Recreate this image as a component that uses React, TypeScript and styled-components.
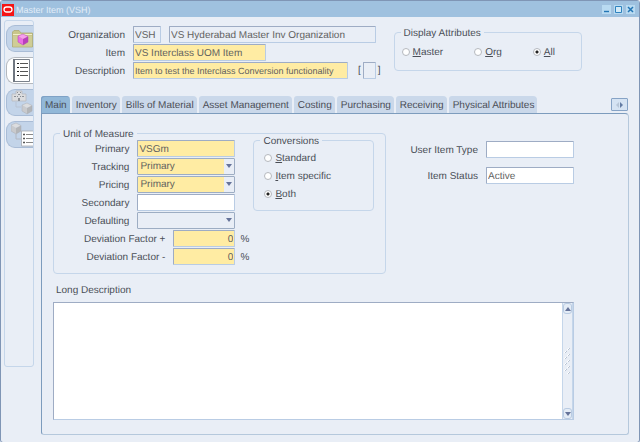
import React, { useState } from "react";
import styled, { createGlobalStyle } from "styled-components";

const c = {
  bg: "#e9eef6",
  title: "#9fc1df",
  text: "#4a4e56",
  fieldText: "#62625f",
  group: "#c5d6ea",
  edge: "#9eacc4",
  soft: "#b9cce4",
  panel: "#7d9cbd",
  yellow: "#ffeca3",
  tab: "#cad8ea",
  tabOn: "#92b8d8",
};

const Global = createGlobalStyle`
  *, *::before, *::after { box-sizing: border-box; }
  body {
    margin: 0;
    background: ${c.bg};
    color: ${c.text};
    font: 10px/12px "Liberation Sans", Arial, sans-serif;
    text-rendering: geometricPrecision;
  }
  button, input, select, textarea {
    font: inherit;
    color: inherit;
    margin: 0;
    text-rendering: inherit;
  }
`;

const Window = styled.main`
  display: flex;
  flex-direction: column;
  min-height: 100vh;
  border: 1px solid #7f95b5;
  border-radius: 3px;
  background: ${c.bg};
`;

const TitleBar = styled.header`
  display: flex;
  align-items: center;
  height: 16px;
  padding: 0 3px 0 1px;
  gap: 1px;
  background: ${c.title};
  color: #e2edf8;
`;

const Title = styled.h1`
  flex: 1;
  margin: 0;
  padding-top: 2px;
  font: inherit;
  font-size: 9px;
`;

const WindowButton = styled.button`
  display: flex;
  width: 11px;
  height: 10px;
  padding: 0;
  border: 0;
  background: none;
  svg { display: block; }
`;

const Body = styled.div`
  display: flex;
  flex: 1;
  gap: 7px;
  padding: 3px 10px 7px 3px;
`;

const Rail = styled.nav`
  align-self: flex-start;
  display: flex;
  flex-direction: column;
  align-items: flex-end;
  gap: 5px;
  width: 30px;
  min-height: 347px;
  padding: 4px 0;
  border: 1px solid ${c.group};
  border-radius: 3px;
`;

const RailButton = styled.button<{ $on?: boolean }>`
  display: flex;
  align-items: center;
  justify-content: flex-end;
  width: 27px;
  height: 27px;
  padding: 0;
  border: 1px solid ${(p) => (p.$on ? "#b4b8be" : "#a9bcd6")};
  border-right: 0;
  border-radius: 9px 0 0 9px;
  background: ${(p) => (p.$on ? "#fff" : "#c3d4e9")};
`;

const Content = styled.div`
  flex: 1;
  min-width: 0;
  display: flex;
  flex-direction: column;
`;

const Heading = styled.section`
  display: flex;
  align-items: flex-start;
  gap: 13px;
  height: 76px;
  padding-top: 6px;
`;

const Fields = styled.div`
  display: grid;
  grid-template-columns: 84px auto;
  column-gap: 8px;
  row-gap: 1px;
  align-items: center;
`;

const Label = styled.label`
  padding-top: 3px;
  text-align: right;
  white-space: nowrap;
`;

const Line = styled.div<{ $gap?: number }>`
  display: flex;
  align-items: center;
  gap: ${(p) => p.$gap ?? 8}px;
`;

const Field = styled.input<{
  $w: number;
  $tone?: "required" | "locked";
  $right?: boolean;
  $compact?: boolean;
}>`
  width: ${(p) => p.$w}px;
  height: 17px;
  padding: 1px 1px 0;
  border: 1px solid;
  border-color: ${c.edge} ${c.soft} ${c.soft} ${c.edge};
  border-radius: 1px;
  background: ${(p) => (p.$tone === "required" ? c.yellow : p.$tone === "locked" ? c.bg : "#fff")};
  color: ${c.fieldText};
  font-size: ${(p) => (p.$compact ? 9 : 10)}px;
  text-align: ${(p) => (p.$right ? "right" : "left")};
  outline: 0;
`;

const Group = styled.fieldset`
  min-width: 0;
  margin: 0;
  padding: 0;
  border: 1px solid ${c.group};
  border-radius: 4px;
`;

const Legend = styled.legend`
  height: 12px;
  margin-left: 6px;
  padding: 2px 3px 0;
`;

const DisplayGroup = styled(Group)`
  width: 188px;
  height: 45px;
`;

const DisplayOptions = styled.div`
  display: flex;
  gap: 31px;
  padding: 8px 7px 0;
`;

const RadioLabel = styled.label`
  display: flex;
  align-items: center;
  gap: 3px;
  height: 12px;
  white-space: nowrap;
  span { padding-top: 1px; }
  u { text-underline-offset: 1px; }
`;

const Radio = styled.input`
  appearance: none;
  width: 8px;
  height: 8px;
  margin: 0;
  border: 1px solid #b5b8be;
  border-radius: 50%;
  background: #fff;
  &:checked { background: radial-gradient(circle, #222 0 1px, #fff 2px); }
`;

const TabRow = styled.div`
  display: flex;
  align-items: flex-end;
  justify-content: space-between;
  padding-right: 1px;
`;

const Tabs = styled.div`
  display: flex;
  gap: 2px;
`;

const Tab = styled.button<{ $on: boolean }>`
  height: 17px;
  padding: 3px 3px 0 4px;
  border: 0;
  border-radius: 3px 4px 0 0;
  background: ${(p) => (p.$on ? c.tabOn : c.tab)};
  box-shadow: ${(p) => (p.$on ? "inset 1px 1px #7fa2c6" : "none")};
  white-space: nowrap;
`;

const ScrollTabs = styled.button`
  display: flex;
  align-items: center;
  justify-content: center;
  width: 17px;
  height: 13px;
  margin-bottom: 2px;
  padding: 0;
  border: 1px solid #86a3c6;
  border-radius: 1px;
  background: #d5e3f3;
`;

const Panel = styled.section`
  flex: 1;
  padding: 13px 54px 14px 11px;
  border: 1px solid;
  border-color: ${c.panel} #b5c8dc #b5c8dc ${c.panel};
  border-radius: 0 4px 3px 3px;
  display: flex;
  flex-direction: column;
`;

const Columns = styled.div`
  display: flex;
  justify-content: space-between;
  align-items: flex-start;
`;

const UnitGroup = styled(Group)`
  width: 333px;
  height: 147px;
`;

const UnitBody = styled.div`
  display: flex;
  gap: 18px;
  align-items: flex-start;
  padding: 1px 11px 0 9px;
`;

const UnitFields = styled.div`
  display: flex;
  flex-direction: column;
  gap: 1px;
  width: 173px;
`;

const FieldRow = styled.div`
  display: flex;
  align-items: center;
  justify-content: flex-end;
  gap: 8px;
`;

const PercentField = styled.span`
  display: flex;
  align-items: center;
  gap: 5px;
  width: 62px;
  white-space: nowrap;
  span { padding-top: 2px; }
`;

const ConversionGroup = styled(Group)`
  width: 121px;
  height: 77px;
  margin-top: -6px;
`;

const ConversionOptions = styled.div`
  display: flex;
  flex-direction: column;
  gap: 6px;
  padding: 6px 0 0 10px;
`;

const SelectBox = styled.span<{ $required?: boolean }>`
  position: relative;
  display: block;
  width: 98px;
  height: 17px;
  border: 1px solid #9dadc3;
  border-radius: 1px;
  background: ${(p) =>
    p.$required ? `linear-gradient(to left, ${c.bg} 10px, ${c.yellow} 10px)` : c.bg};
  svg { position: absolute; right: 2px; top: 5px; pointer-events: none; }
`;

const Select = styled.select`
  appearance: none;
  display: block;
  width: 100%;
  height: 15px;
  padding: 1px 12px 0 2px;
  border: 0;
  background: none;
  color: ${c.fieldText};
  outline: 0;
`;

const SideFields = styled.div`
  display: flex;
  flex-direction: column;
  gap: 9px;
  padding-top: 14px;
`;

const LongLabel = styled.label`
  margin: 11px 0 5px 3px;
`;

const LongBox = styled.div`
  display: flex;
  flex: 1;
  min-height: 118px;
  border: 1px solid;
  border-color: ${c.edge} ${c.soft} ${c.soft} ${c.edge};
`;

const LongText = styled.textarea`
  flex: 1;
  min-width: 0;
  padding: 2px;
  border: 0;
  outline: 0;
  resize: none;
  background: #fff;
`;

const ScrollTrack = styled.div`
  display: flex;
  flex-direction: column;
  align-items: center;
  justify-content: space-between;
  width: 11px;
  border: solid ${c.group};
  border-width: 0 1px;
  background: ${c.bg};
`;

const ScrollButton = styled.button`
  display: flex;
  align-items: center;
  justify-content: center;
  width: 9px;
  height: 11px;
  padding: 0;
  border: 1px solid #b9cbe2;
  border-radius: 3px;
  background: #e4ecf6;
`;

const Arrow = ({ up = false }: { up?: boolean }) => (
  <svg width="6" height="4" viewBox="0 0 6 4" aria-hidden="true">
    <path d={up ? "M0 4H6L3 0Z" : "M0 0H6L3 4Z"} fill="#65739a" />
  </svg>
);

const OracleMark = () => (
  <svg width="13" height="13" viewBox="0 0 13 13" aria-hidden="true">
    <rect x="0" y="1" width="12" height="12" fill="#f51414" />
    <rect x="2" y="4" width="8" height="5" rx="2.5" fill="none" stroke="#fff" strokeWidth="1.3" />
  </svg>
);

const WindowIcon = ({ kind }: { kind: "min" | "max" | "close" }) => (
  <svg width="11" height="10" viewBox="0 0 11 10" aria-hidden="true">
    <rect x="1" y="1" width="9" height="9" fill="#b9daf1" />
    {kind === "min" && <path d="M3 7.5H8" stroke="#2476b5" strokeWidth="1.4" />}
    {kind === "max" && <path d="M2.500 2.500H8.500V8.500H2.500Z" fill="#d3eaf8" stroke="#2f83bf" />}
    {kind === "close" && <path d="M3 3L8 8M8 3L3 8" stroke="#2476b5" strokeWidth="1.5" />}
  </svg>
);

const Cube = ({ x, y, pink = false }: { x: number; y: number; pink?: boolean }) => (
  <g transform={`translate(${x} ${y})`}>
    <path d="M0 2L5 0L10 2.500L5 5Z" fill={pink ? "#f7a0ee" : "#dcdddf"} />
    <path d="M0 2L5 5V11L0 8Z" fill={pink ? "#ea6fe4" : "#c9cacd"} />
    <path d="M5 5L10 2.500V8L5 11Z" fill={pink ? "#b93fbd" : "#b3b5b8"} />
    <path d="M0 2L5 0L10 2.500V8L5 11L0 8Z" fill="none" stroke={pink ? "#b043b5" : "#a8adb4"} strokeWidth=".5" />
  </g>
);

const FolderIcon = () => (
  <svg width="21" height="20" viewBox="0 0 21 20" aria-hidden="true">
    <path d="M.5 18V3L2 1.500H7L9 4H20.500V18Z" fill="#c9c68a" stroke="#aaa66c" strokeWidth=".7" />
    <path d="M1 7H20V17.500H1Z" fill="#cfcd96" />
    <path d="M1 5.500H20" stroke="#f0edc8" />
    <Cube x={6} y={5} pink />
  </svg>
);

const ListIcon = () => (
  <svg width="21" height="25" viewBox="0 0 21 25" aria-hidden="true">
    <path d="M1.500 1.500H17.500V23.500H1.500Z" fill="#fff" stroke="#7a818b" />
    <path d="M2 1V24" stroke="#6f7680" strokeWidth="2" />
    <path d="M5 5.500h2M5 9.500h2M5 13.500h2M5 17.500h2" stroke="#222" strokeWidth="1.200" />
    <path d="M8 5.500h8M8 9.500h8M8 13.500h8M8 17.500h8" stroke="#555" />
  </svg>
);

const OrgItemIcon = () => (
  <svg width="22" height="25" viewBox="0 0 22 25" aria-hidden="true">
    <path d="M1 4H5V1H11V4H15V11H1Z" fill="#dcdddf" stroke="#b4b6ba" strokeWidth=".7" />
    <path d="M6 2.500h1M9 2.500h1M7 4.500h2M3 6.500h2M11 6.500h2M6 6.500h1M9 6.500h1" stroke="#8c9096" />
    <path d="M7 8H9V11H7Z" fill="#8c9096" />
    <path d="M5 12V17H10" fill="none" stroke="#b9c3d2" />
    <Cube x={11} y={13} />
  </svg>
);

const ItemListIcon = () => (
  <svg width="22" height="25" viewBox="0 0 22 25" aria-hidden="true">
    <Cube x={0} y={1} />
    <path d="M5 12V17H10" fill="none" stroke="#b3b8c2" />
    <path d="M10.500 9H22.500V24H10.500Z" fill="#fff" stroke="#a6aab0" strokeWidth=".8" />
    <path d="M12 12.500h2M12 16.500h2M12 20.500h2" stroke="#555" strokeWidth="1.400" />
    <path d="M15 12.500h7M15 16.500h7M15 20.500h7" stroke="#888" />
  </svg>
);

const Option = ({ name, text, checked, onPick }: { name: string; text: string; checked: boolean; onPick: () => void }) => (
  <RadioLabel>
    <Radio type="radio" name={name} checked={checked} onChange={onPick} />
    <span><u>{text[0]}</u>{text.slice(1)}</span>
  </RadioLabel>
);

const PickList = ({ id, value, required }: { id: string; value: string; required?: boolean }) => (
  <SelectBox $required={required}>
    <Select id={id} defaultValue={value}>
      <option>{value}</option>
    </Select>
    <Arrow />
  </SelectBox>
);

const tabNames = [
  "Main", "Inventory", "Bills of Material", "Asset Management",
  "Costing", "Purchasing", "Receiving", "Physical Attributes",
];

export default function App() {
  const [tab, setTab] = useState("Main");
  const [display, setDisplay] = useState("All");
  const [conversion, setConversion] = useState("Both");

  return (
    <>
      <Global />
      <Window>
        <TitleBar>
          <OracleMark />
          <Title>Master Item (VSH)</Title>
          <WindowButton aria-label="Minimize"><WindowIcon kind="min" /></WindowButton>
          <WindowButton aria-label="Maximize"><WindowIcon kind="max" /></WindowButton>
          <WindowButton aria-label="Close"><WindowIcon kind="close" /></WindowButton>
        </TitleBar>
        <Body>
          <Rail aria-label="Item tools">
            <RailButton aria-label="Open folder"><FolderIcon /></RailButton>
            <RailButton $on aria-label="Item attributes"><ListIcon /></RailButton>
            <RailButton aria-label="Organization assignment"><OrgItemIcon /></RailButton>
            <RailButton aria-label="Item details"><ItemListIcon /></RailButton>
          </Rail>
          <Content>
            <Heading>
              <Fields>
                <Label htmlFor="org">Organization</Label>
                <Line>
                  <Field id="org" $w={28} $tone="locked" defaultValue="VSH" />
                  <Field $w={207} $tone="locked" aria-label="Organization name" defaultValue="VS Hyderabad Master Inv Organization" />
                </Line>
                <Label htmlFor="item">Item</Label>
                <Field id="item" $w={133} $tone="required" defaultValue="VS Interclass UOM Item" />
                <Label htmlFor="desc">Description</Label>
                <Line $gap={10}>
                  <Field id="desc" $w={215} $tone="required" $compact defaultValue="Item to test the Interclass Conversion functionality" />
                  <Line $gap={2}>
                    <span>[</span>
                    <Field $w={13} $tone="locked" aria-label="Flexfield" />
                    <span>]</span>
                  </Line>
                </Line>
              </Fields>
              <DisplayGroup>
                <Legend>Display Attributes</Legend>
                <DisplayOptions>
                  {["Master", "Org", "All"].map((t) => (
                    <Option key={t} name="display" text={t} checked={display === t} onPick={() => setDisplay(t)} />
                  ))}
                </DisplayOptions>
              </DisplayGroup>
            </Heading>
            <TabRow>
              <Tabs role="tablist">
                {tabNames.map((t) => (
                  <Tab key={t} role="tab" aria-selected={tab === t} $on={tab === t} onClick={() => setTab(t)}>{t}</Tab>
                ))}
              </Tabs>
              <ScrollTabs aria-label="Scroll tabs">
                <svg width="9" height="6" viewBox="0 0 9 6" aria-hidden="true">
                  <path d="M4 0V6L1 3Z" fill="#b7c6d8" />
                  <path d="M5 0V6L8 3Z" fill="#627ba3" />
                </svg>
              </ScrollTabs>
            </TabRow>
            <Panel>
              <Columns>
                <UnitGroup>
                  <Legend>Unit of Measure</Legend>
                  <UnitBody>
                    <UnitFields>
                      <FieldRow><Label htmlFor="primary">Primary</Label><Field id="primary" $w={98} $tone="required" defaultValue="VSGm" /></FieldRow>
                      <FieldRow><Label htmlFor="tracking">Tracking</Label><PickList id="tracking" value="Primary" required /></FieldRow>
                      <FieldRow><Label htmlFor="pricing">Pricing</Label><PickList id="pricing" value="Primary" required /></FieldRow>
                      <FieldRow><Label htmlFor="secondary">Secondary</Label><Field id="secondary" $w={98} /></FieldRow>
                      <FieldRow><Label htmlFor="defaulting">Defaulting</Label><PickList id="defaulting" value="" /></FieldRow>
                      {["+", "-"].map((s) => (
                        <FieldRow key={s}>
                          <Label htmlFor={`dev${s}`}>Deviation Factor {s}</Label>
                          <PercentField>
                            <Field id={`dev${s}`} $w={62} $tone="required" $right defaultValue="0" />
                            <span>%</span>
                          </PercentField>
                        </FieldRow>
                      ))}
                    </UnitFields>
                    <ConversionGroup>
                      <Legend>Conversions</Legend>
                      <ConversionOptions>
                        {["Standard", "Item specific", "Both"].map((t) => (
                          <Option key={t} name="conversion" text={t} checked={conversion === t} onPick={() => setConversion(t)} />
                        ))}
                      </ConversionOptions>
                    </ConversionGroup>
                  </UnitBody>
                </UnitGroup>
                <SideFields>
                  <FieldRow><Label htmlFor="type">User Item Type</Label><Field id="type" $w={88} /></FieldRow>
                  <FieldRow><Label htmlFor="status">Item Status</Label><Field id="status" $w={88} defaultValue="Active" /></FieldRow>
                </SideFields>
              </Columns>
              <LongLabel htmlFor="long">Long Description</LongLabel>
              <LongBox>
                <LongText id="long" />
                <ScrollTrack>
                  <ScrollButton aria-label="Scroll up"><Arrow up /></ScrollButton>
                  <svg width="7" height="27" viewBox="0 0 7 27" aria-hidden="true">
                    <path d="M4 2l2-2M1 5l2-2M4 8l2-2M1 11l2-2M4 14l2-2M1 17l2-2M4 20l2-2M1 23l2-2M4 26l2-2" stroke="#b9c4d4" />
                    <path d="M3 2l2-2M0 5l2-2M3 8l2-2M0 11l2-2M3 14l2-2M0 17l2-2M3 20l2-2M0 23l2-2M3 26l2-2" stroke="#fff" />
                  </svg>
                  <ScrollButton aria-label="Scroll down"><Arrow /></ScrollButton>
                </ScrollTrack>
              </LongBox>
            </Panel>
          </Content>
        </Body>
      </Window>
    </>
  );
}
